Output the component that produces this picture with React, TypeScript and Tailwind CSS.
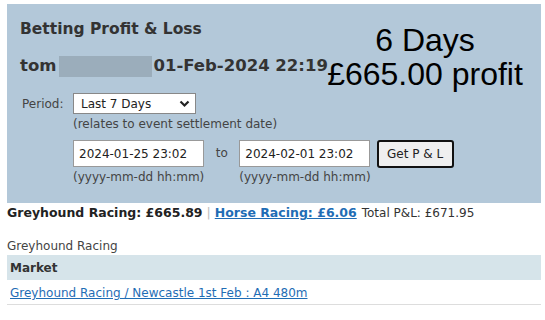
import React from 'react';

const font = { fontFamily: '"DejaVu Sans", Verdana, sans-serif' };

const ProfitPanel: React.FC = () => (
    <div className="relative bg-[#b3c8d9] px-[13px] pt-[14px] pb-[18px]">
        <h1 className="text-[15.5px] font-bold text-[#333] leading-[22px]">Betting Profit &amp; Loss</h1>
        <div className="mt-[15px] flex items-center text-[16.5px] font-bold text-[#333] leading-[22px]">
            <span>tom</span>
            <span className="ml-[3px] mr-[1px] h-[21px] w-[93px] bg-[#9badbb]" />
            <span>01-Feb-2024 22:19</span>
        </div>

        <div className="mt-[16px] flex items-center text-[12px] text-[#444]">
            <span className="w-[53px] pl-[2px]">Period:</span>
            <div className="flex h-[21px] w-[123px] items-center justify-between border border-[#888] bg-white pl-[7px] pr-[5px] text-[#222]">
                <span>Last 7 Days</span>
                <svg width="11" height="8" viewBox="0 0 11 8" fill="none">
                    <path d="M1.5 1.5 5.5 5.5 9.5 1.5" stroke="#222" strokeWidth="2.2" />
                </svg>
            </div>
        </div>
        <div className="ml-[53px] mt-[2px] text-[12px] text-[#444] leading-[16px]">(relates to event settlement date)</div>

        <div className="ml-[53px] mt-[8px] flex items-start text-[12px]">
            <div className="flex flex-col">
                <div className="flex h-[27px] w-[131px] items-center border border-[#999] bg-white px-[5px] text-[#222]">2024-01-25 23:02</div>
                <span className="mt-[2px] text-[#444] leading-[16px]">(yyyy-mm-dd hh:mm)</span>
            </div>
            <span className="w-[35px] pt-[4px] text-center text-[#444]">to</span>
            <div className="flex flex-col">
                <div className="flex h-[27px] w-[131px] items-center border border-[#999] bg-white px-[5px] text-[#222]">2024-02-01 23:02</div>
                <span className="mt-[2px] text-[#444] leading-[16px]">(yyyy-mm-dd hh:mm)</span>
            </div>
            <button className="ml-[6px] h-[28px] w-[77px] rounded-[3px] border-2 border-[#111] bg-[#efefef] text-[12px] text-[#222]">
                Get P &amp; L
            </button>
        </div>

        <div
            className="absolute left-[303px] top-[19px] w-[230px] text-center text-[32px] leading-[34px] text-black"
            style={{ fontFamily: '"Liberation Sans", Arial, sans-serif' }}
        >
            <div>6 Days</div>
            <div>£665.00 profit</div>
        </div>
    </div>
);

export default function App() {
    return (
        <div className="min-h-[320px] bg-white pl-[7px] pr-[4px] pt-[4px]" style={font}>
            <ProfitPanel />

            <div className="mt-[1px] flex items-center text-[12.5px] leading-[18px]">
                <span className="font-bold text-[#222]">Greyhound Racing: £665.89</span>
                <span className="mx-[4px] text-[#bbb]">|</span>
                <a href="#" className="font-bold text-[#1f6db5] underline">Horse Racing: £6.06</a>
                <span className="ml-[5px] text-[12px] text-[#333]">Total P&amp;L: £671.95</span>
            </div>

            <div className="mt-[15px] text-[12px] leading-[18px] text-[#444]">Greyhound Racing</div>
            <div className="flex h-[25px] items-center bg-[#d6e4ea] pl-[3px] text-[12px] font-bold text-[#333]">Market</div>
            <div className="flex h-[25px] items-center border-b border-[#ddd] pl-[3px] pt-[2px] text-[12px]">
                <a href="#" className="text-[#1f6db5] underline">Greyhound Racing / Newcastle 1st Feb : A4 480m</a>
            </div>
        </div>
    );
}
